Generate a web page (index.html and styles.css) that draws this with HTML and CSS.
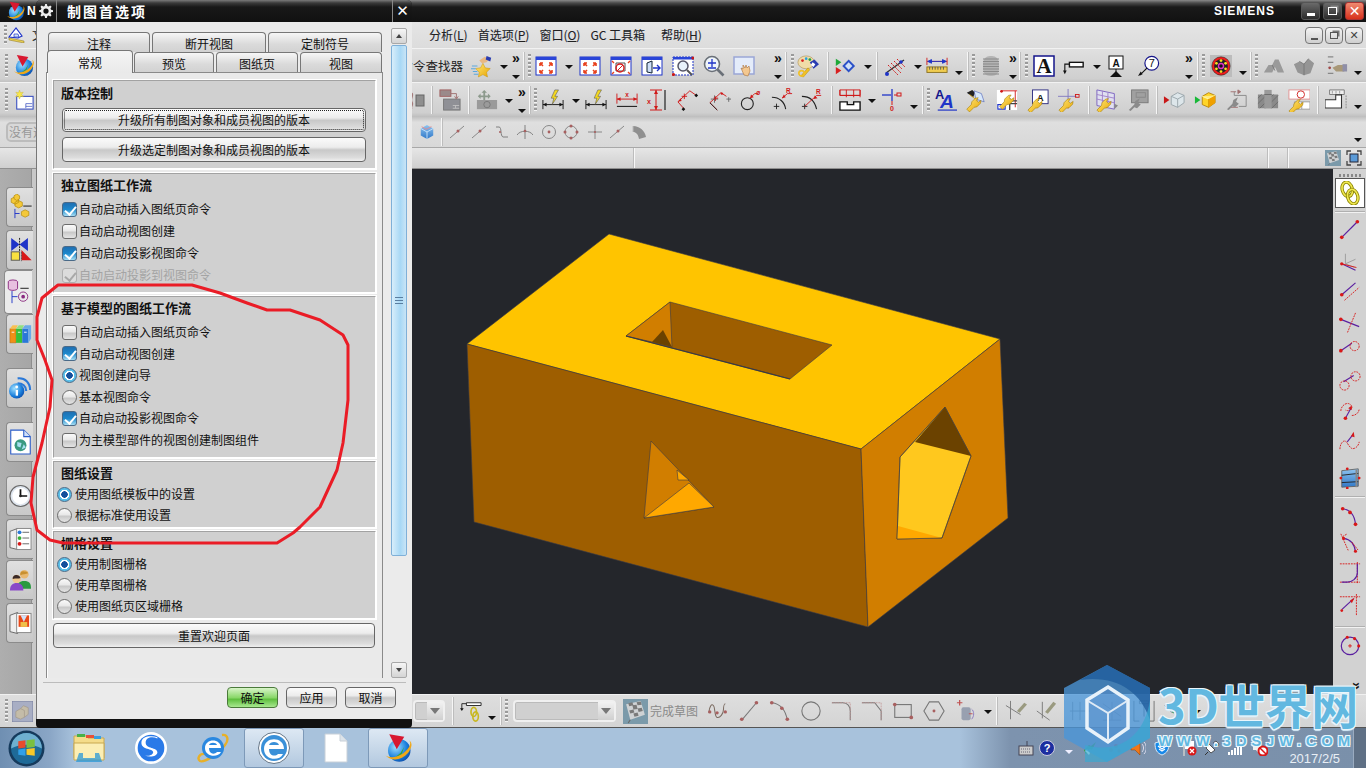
FILE: index.html
```html
<!DOCTYPE html>
<html lang="zh-CN">
<head>
<meta charset="utf-8">
<title>NX 制图首选项</title>
<link rel="stylesheet" href="styles.css">
</head>
<body>
<svg class="defs" aria-hidden="true">
<defs>
<radialGradient id="gb" cx=".35" cy=".35" r=".8"><stop offset="0" stop-color="#9fe0ff"/><stop offset=".6" stop-color="#1a7fdc"/><stop offset="1" stop-color="#0a3f9c"/></radialGradient>
<linearGradient id="gw" x1="0" y1="0" x2="0" y2="1"><stop offset="0" stop-color="#8fc4f0"/><stop offset="1" stop-color="#2f78c8"/></linearGradient>
<linearGradient id="gy" x1="0" y1="0" x2="1" y2="1"><stop offset="0" stop-color="#ffe97a"/><stop offset="1" stop-color="#e8a400"/></linearGradient>
<symbol id="logo" viewBox="0 0 24 24"><circle cx="13" cy="14" r="9" fill="url(#gb)"/><path d="M9 20l5-4 3-5-2 6z" fill="#35a83a"/><path d="M2 18c5 3 14 1 19-7 1-2 1-4 0-5 3 2 2 6-1 10-5 6-13 7-18 2z" fill="#f0a818"/><path d="M5 1l12 2-6 10z" fill="#d81830"/></symbol>
<symbol id="mi0" viewBox="0 0 18 16"><path d="M1 10L8 1l6 8-4 2z" fill="#fff" stroke="#1f34c8" stroke-width="1.200"/><path d="M6 7h4l1 3H6z" fill="#cfe0f8" stroke="#1f34c8" stroke-width=".7"/><path d="M1 11l15 3v2L1 13z" fill="#e8d050" stroke="#8a7020" stroke-width=".5"/></symbol>
<symbol id="nw" viewBox="0 0 22 22"><rect x="3" y="7" width="18" height="14" fill="#fff" stroke="#3a50c0" stroke-width="1.200"/><path d="M13 15h7M13 18h7M13 15v5" stroke="#3a50c0" stroke-width=".8"/><path d="M6 0l1.200 3 3-.6-1.800 2.600 2 2.400-3-.4L6 10 4.800 7 1.800 7.400l2-2.400L2 2.400 5 3z" fill="#f8e84c" stroke="#c8b020" stroke-width=".4"/></symbol>
<symbol id="win" viewBox="0 0 22 22"><rect x="1" y="2" width="20" height="18" fill="#fff" stroke="#1f34c8"/><rect x="1" y="2" width="20" height="3" fill="#2a45d8"/><g fill="none" stroke="#e8401c" stroke-width="1.600"><path d="M5 8l3 3M5 8h3M5 8v3M17 8l-3 3M17 8h-3M17 8v3M5 18l3-3M5 18h3M5 18v-3M17 18l-3-3M17 18h-3M17 18v-3"/></g></symbol>
<symbol id="winb" viewBox="0 0 22 22"><rect x="1" y="2" width="20" height="18" fill="#fff" stroke="#1f34c8"/><rect x="1" y="2" width="20" height="3" fill="#2a45d8"/><path d="M6 8h9v8H6z" fill="none" stroke="#555"/><circle cx="10" cy="13" r="4" fill="none" stroke="#d81c1c" stroke-width="1.400"/><path d="M7 16l6-6" stroke="#d81c1c"/><path d="M2 6l2 2M20 6l-2 2M2 19l2-2M20 19l-2-2" stroke="#e8401c" stroke-width="1.400"/></symbol>
<symbol id="wind" viewBox="0 0 22 22"><rect x="1" y="2" width="20" height="18" fill="#fff" stroke="#1f34c8"/><rect x="1" y="2" width="20" height="3" fill="#2a45d8"/><path d="M6 8l5-2v12l-5-1z" fill="#cfe0f8" stroke="#123"/><path d="M12 13h7M16 10l3 3-3 3" fill="none" stroke="#1f34c8" stroke-width="1.400"/></symbol>
<symbol id="wins" viewBox="0 0 22 22"><rect x="1" y="2" width="20" height="18" fill="#fff" stroke="#1f34c8" stroke-dasharray="2 1"/><rect x="1" y="2" width="20" height="2.500" fill="#2a45d8"/><circle cx="11" cy="11" r="5" fill="#e8f2fa" stroke="#556" stroke-width="1.500"/><path d="M15 15l5 5" stroke="#555" stroke-width="2"/><circle cx="21" cy="3" r="1.600" fill="#c81818"/><circle cx="1.500" cy="19.500" r="1.600" fill="#c81818"/></symbol>
<symbol id="mag" viewBox="0 0 22 22"><circle cx="9" cy="9" r="7.500" fill="#eef4fa" stroke="#6a7078" stroke-width="1.600"/><path d="M14.500 14.500l6 6" stroke="#6a7078" stroke-width="2.600"/><path d="M5 8h8M9 4v8M5 13h8" stroke="#1f34c8" stroke-width="1.300"/></symbol>
<symbol id="hwin" viewBox="0 0 22 22"><rect x="1" y="2" width="20" height="17" fill="#e4ecfa" stroke="#9aa6d6" stroke-width="1.500"/><path d="M11 20l-3-7 2 1 0-4 2 3 1-3 1 3 2-2 1 5-2 5z" fill="#f4c890" stroke="#a8703a" stroke-width=".6"/></symbol>
<symbol id="star" viewBox="0 0 24 24"><path d="M13 9l2.500 5 5.500.8-4 3.900 1 5.300-5-2.600-5 2.600 1-5.300-4-3.900 5.500-.8z" fill="url(#gy)" stroke="#c89000" stroke-width=".5"/><path d="M1 12h6M0 15h5M2 18h5M3 21h5" stroke="#4ea4e0"/><path d="M9 6l6-4 5 2-3 4-5 1z" fill="#e8b884"/><path d="M17 1l5 2-1 4-5-2z" fill="#2a3cb0"/></symbol>
<symbol id="pal" viewBox="0 0 24 24"><ellipse cx="10" cy="8" rx="9" ry="7" fill="#f0dca8" stroke="#a88848" stroke-width=".6"/><circle cx="6" cy="6" r="1.500" fill="#d82020"/><circle cx="10" cy="4" r="1.500" fill="#2aa0e0"/><circle cx="14" cy="5" r="1.500" fill="#20a040"/><path d="M14 8l5-3 5 5-6 5z" fill="#2a3cb0"/><path d="M17 8l3 2-2 3-3-2z" fill="#fff"/><path d="M4 23l8-9 2 2-7 8z" fill="#f0c028" stroke="#b08808" stroke-width=".5"/><circle cx="5" cy="20" r="3" fill="none" stroke="#f0c028" stroke-width="1.800"/></symbol>
<symbol id="dia" viewBox="0 0 24 24"><path d="M2 4l6 4-6 4z" fill="#1ea838"/><path d="M2 13l6 4-6 4z" fill="#d82020"/><path d="M9 12l7-7 7 7-7 7z" fill="#2a50c8"/><path d="M12 12l4-4 4 4-4 4z" fill="#cfe0f8"/></symbol>
<symbol id="redd" viewBox="0 0 22 22"><path d="M1 18L19 5" stroke="#333" stroke-width="1.400"/><path d="M3 10l10 10M6 8l10 10M9 6l8 8M12 4l8 8" stroke="#d02020" stroke-dasharray="2 1"/><circle cx="2" cy="19" r="2" fill="#1f34c8"/><circle cx="16" cy="7" r="1.800" fill="#1f34c8"/></symbol>
<symbol id="rule" viewBox="0 0 24 24"><path d="M1 7h22M1 3v8M23 3v8" stroke="#d02020" fill="none"/><path d="M2 7h20M2 7l4-2v4zM22 7l-4-2v4z" stroke="#1f34c8" fill="#1f34c8"/><rect x="1" y="13" width="22" height="6" fill="#f0cc50" stroke="#8a7020"/><path d="M4 13v3M7 13v3M10 13v3M13 13v3M16 13v3M19 13v3" stroke="#555"/></symbol>
<symbol id="spring" viewBox="0 0 22 22"><rect x="3" y="1" width="16" height="20" rx="7" fill="#b4b4b4"/><path d="M3 4h16M3 6.500h16M3 9h16M3 11.500h16M3 14h16M3 16.500h16M3 19h16" stroke="#8a8a8a"/></symbol>
<symbol id="abox" viewBox="0 0 22 22"><rect x="1" y="1" width="20" height="20" fill="#fff" stroke="#14148a" stroke-width="1.500"/><text x="11" y="18" class="ta">A</text></symbol>
<symbol id="lead" viewBox="0 0 24 24"><rect x="7" y="8" width="15" height="5" fill="#fff" stroke="#111" stroke-width="1.500"/><path d="M7 10H2v8" fill="none" stroke="#111" stroke-width="1.200"/><path d="M0 17h4l-2 4z" fill="#111"/></symbol>
<symbol id="astand" viewBox="0 0 22 22"><rect x="4" y="1" width="14" height="13" fill="#fff" stroke="#111"/><text x="11" y="12" class="tb2">A</text><path d="M11 14v3" stroke="#111"/><path d="M5 22l6-6 6 6z" fill="#111"/></symbol>
<symbol id="bal" viewBox="0 0 24 24"><circle cx="15" cy="9" r="7.500" fill="#fff" stroke="#14148a" stroke-width="1.300"/><text x="15" y="13.500" class="tb3">7</text><path d="M10 14L2 22" stroke="#111" stroke-width="1.200"/><path d="M0 23l3-5 2 3z" fill="#111"/></symbol>
<symbol id="bear" viewBox="0 0 24 24"><rect width="24" height="24" fill="#bcbcbc"/><circle cx="12" cy="12" r="10" fill="#f01c1c" stroke="#222" stroke-width=".6"/><circle cx="12" cy="12" r="7.500" fill="#222"/><circle cx="12" cy="12" r="3.500" fill="#e030c8"/><circle cx="12" cy="12" r="2" fill="#111"/><g fill="#f8e020"><circle cx="12" cy="6" r="1.500"/><circle cx="17" cy="9" r="1.500"/><circle cx="17" cy="15" r="1.500"/><circle cx="12" cy="18" r="1.500"/><circle cx="7" cy="15" r="1.500"/><circle cx="7" cy="9" r="1.500"/></g></symbol>
<symbol id="g1" viewBox="0 0 24 24"><path d="M1 19l5-8h4l3-6h4l6 14H16l-3-6-3 6z" fill="#9a9a9a"/><path d="M10 11l3 6" stroke="#777"/></symbol>
<symbol id="g2" viewBox="0 0 24 24"><path d="M1 10l6-3 5 3 5-6 6 5-4 11-7 2-7-3z" fill="#959595"/><path d="M12 10v12M7 7l5 3 5-6" stroke="#777" fill="none"/></symbol>
<symbol id="g3" viewBox="0 0 24 24"><path d="M2 2h6M2 8h6M2 20h6" stroke="#888" stroke-width="1.500"/><circle cx="4" cy="14" r="1.500" fill="#a04848"/><path d="M7 14l6-3h7v7h-9z" fill="#a89878"/><rect x="18" y="10" width="5" height="8" fill="#8f8fa8"/></symbol>
<symbol id="gry1" viewBox="0 0 22 22"><path d="M1 4c2 3-2 6 0 9s-2 5 0 7M5 4c2 3-2 6 0 9s-2 5 0 7M9 4c2 3-2 6 0 9s-2 5 0 7" fill="none" stroke="#a47a7a" stroke-width="1.300"/><rect x="13" y="6" width="8" height="11" fill="#8f8f8f" stroke="#666"/></symbol>
<symbol id="gry2" viewBox="0 0 24 24"><rect x="1" y="1" width="12" height="7" fill="#9a8a8a" stroke="#a06060"/><rect x="5" y="11" width="18" height="12" fill="#8f9096" stroke="#777"/><path d="M13 5h6v5M17 8l2 3 2-3" fill="none" stroke="#a07070"/><path d="M15 18h7M15 21h7M18 18v3" stroke="#c0c0c0"/></symbol>
<symbol id="move" viewBox="0 0 24 24"><path d="M6 1l3 3H7v3h3V5l3 3-3 3V9H7v3h2l-3 3-3-3h2V9H2v2L-1 8l3-3v2h3V4H3z" fill="#8d9a8d" transform="translate(3 0)"/><rect x="1" y="12" width="22" height="10" fill="#9a9a9a"/><circle cx="12" cy="17" r="3.500" fill="none" stroke="#777"/></symbol>
<symbol id="dim" viewBox="0 0 24 24"><path d="M1 12v10M23 12v10M1 17h22" stroke="#111"/><path d="M1 17l4-2v4zM23 17l-4-2v4z" fill="#111"/><path d="M14 1l-4 9h3l-2 7 6-9h-3l4-7z" fill="#f4d820" stroke="#555" stroke-width=".6"/></symbol>
<symbol id="dimx" viewBox="0 0 24 24"><path d="M1 5v11M23 5v11M1 11h22" stroke="#d01818"/><path d="M1 11l4-2v4zM23 11l-4-2v4z" fill="#d01818"/><text x="12" y="9" class="tr">x</text><path d="M1 19h22" stroke="#222" stroke-width="1.200"/></symbol>
<symbol id="dimv" viewBox="0 0 22 22"><path d="M4 1h12M4 21h12M10 1v20" stroke="#d01818"/><path d="M10 1l-2 4h4zM10 21l-2-4h4z" fill="#d01818"/><text x="3" y="15" class="tr">x</text><path d="M19 1v20" stroke="#222" stroke-width="1.200"/></symbol>
<symbol id="ang1" viewBox="0 0 24 24"><path d="M1 14L14 2l7 5M1 14l7 8" fill="none" stroke="#d01818"/><path d="M5 8h6M8 5v6" stroke="#d01818"/><path d="M21 5l2 2-2 2-2-2zM7 20l2 2-2 2-2-2z" fill="#111"/><path d="M1 14l3-4 1 3z" fill="#d01818"/></symbol>
<symbol id="ang2" viewBox="0 0 24 24"><path d="M1 15l12-11 6 4M1 15l8 8" fill="none" stroke="#d01818"/><path d="M1 15l8 8" stroke="#222"/><path d="M2 11h8M6 7v8M19 11h5M21.500 9v5" stroke="#666"/><path d="M5 10h5M7 8v5" stroke="#d01818"/><circle cx="14" cy="5" r="1.300" fill="#d01818"/></symbol>
<symbol id="diam" viewBox="0 0 24 24"><circle cx="8" cy="16" r="6.500" fill="none" stroke="#222" stroke-width="1.200"/><path d="M11 10l5-5h3" fill="none" stroke="#d01818"/><path d="M11 10l1-4 3 3z" fill="#d01818"/><text x="20" y="7" class="tr">ø</text></symbol>
<symbol id="rad1" viewBox="0 0 24 24"><path d="M1 9c8 0 14 5 15 13" fill="none" stroke="#222" stroke-width="1.200"/><path d="M3 19h6M6 16v6" stroke="#222"/><path d="M12 10l6-5h5" fill="none" stroke="#d01818"/><path d="M12 10l2-4 2 3z" fill="#d01818"/><text x="19" y="4.500" class="tr">R</text></symbol>
<symbol id="rad2" viewBox="0 0 24 24"><path d="M1 8c8 0 14 5 16 14" fill="none" stroke="#222" stroke-width="1.200"/><path d="M1 19h6M4 16v6" stroke="#222"/><path d="M4 19l13-12h5" fill="none" stroke="#d01818"/><path d="M14 11l1-4 3 3z" fill="#d01818"/><text x="19" y="5" class="tr">R</text></symbol>
<symbol id="step" viewBox="0 0 24 24"><path d="M1 1h22v6H1zM1 7V1M8 1v8M16 1v8M23 1v8" fill="none" stroke="#d01818"/><path d="M1 14h8v3h7v-3h7v9H1z" fill="#fff" stroke="#111" stroke-width="1.500"/><path d="M1 7h22" stroke="#d01818"/></symbol>
<symbol id="axis" viewBox="0 0 22 22"><path d="M0 6h9" stroke="#1f34c8" stroke-width="1.300"/><path d="M10 0v12" stroke="#1f34c8" stroke-width="1.300"/><path d="M10 12v4" stroke="#d01818"/><path d="M12 6h3" stroke="#d01818"/><rect x="15" y="4" width="4" height="3" fill="none" stroke="#d01818"/><text x="10" y="22" class="tr">0</text></symbol>
<symbol id="aa" viewBox="0 0 24 24"><text x="0" y="11" class="tpa">A</text><text x="13" y="21" class="tpb">A</text><path d="M3 23h21" stroke="#1f34c8" stroke-width="1.300"/></symbol>
<g id="wr"><path d="M3 22l5-5 .5-3 4-4 3-.5-2 3 2 2 3-2-.5 3-4 4-3 .5-5 5z" fill="url(#gy)" stroke="#a07800" stroke-width=".6"/></g>
<symbol id="wr1" viewBox="0 0 24 24"><path d="M3 4l6-3 3 3-2 5z" fill="#222"/><path d="M11 2l8 3 3 9-9-3z" fill="#d8e8fa" stroke="#3a50b0" stroke-width=".6"/><path d="M6 6l9 7" stroke="#c8a020"/><use href="#wr"/></symbol>
<symbol id="wr2" viewBox="0 0 24 24"><rect x="1" y="1" width="22" height="22" fill="#fff"/><path d="M6 2h17M21 2v18" stroke="#d01818"/><path d="M2 17h8v5H2z" fill="none" stroke="#1f34c8" stroke-width="1.200"/><path d="M15 13h8M15 16h8" stroke="#444" stroke-width="1.200"/><path d="M15 10v13" stroke="#111" stroke-width="1.200"/><circle cx="6" cy="2.500" r="1.500" fill="#d01818"/><use href="#wr" transform="translate(1 -3)"/></symbol>
<symbol id="wr3" viewBox="0 0 24 24"><rect x="6" y="1" width="17" height="15" fill="#fff" stroke="#2a2a80"/><text x="14.500" y="13" class="tb2">A</text><use href="#wr" transform="translate(-2 1)"/></symbol>
<symbol id="wr4" viewBox="0 0 24 24"><path d="M11 0v18M0 8h20" stroke="#8078c0"/><rect x="19" y="6" width="4" height="3" fill="none" stroke="#d01818"/><path d="M11 18v3" stroke="#d01818"/><use href="#wr" transform="translate(-2 1)"/></symbol>
<symbol id="wall" viewBox="0 0 24 24"><path d="M1 1l19 4v17l-19-4z" fill="#e0e0f0" stroke="#7a60c0"/><path d="M1 6l19 4M1 11l19 4M7 2v15M13 4v15" stroke="#a080c8"/><path d="M20 16l4 2-4 4z" fill="#888"/><use href="#wr" transform="translate(-2 1)"/></symbol>
<symbol id="gwr" viewBox="0 0 24 24"><rect x="5" y="1" width="18" height="14" fill="#a0a0a0" stroke="#777"/><rect x="10" y="4" width="10" height="5" fill="none" stroke="#888"/><path d="M2 23l6-6 1-4 5-3-2 5 3 2-4 4-3-1-4 4z" fill="#8a8a8a"/></symbol>
<symbol id="cb1" viewBox="0 0 24 24"><path d="M1 8l6 4-6 4z" fill="#c81818"/><path d="M9 8l7-4 7 3v8l-7 5-7-3z" fill="#dde6ea" stroke="#98a4aa"/><path d="M9 8l7 3 7-4M16 11v9" stroke="#98a4aa" fill="none"/></symbol>
<symbol id="cb2" viewBox="0 0 24 24"><path d="M1 8l6 4-6 4z" fill="#18b838"/><path d="M9 8l7-4 7 3v8l-7 5-7-3z" fill="#ffd428" stroke="#b8860b"/><path d="M9 8l7 3 7-4" stroke="#fff6b0" fill="#ffeb80"/><path d="M16 11v9" stroke="#c89000"/><path d="M16 11l7-4v8l-7 5z" fill="#f0a000"/></symbol>
<symbol id="gwr2" viewBox="0 0 24 24"><path d="M9 3v4h13v12H14" fill="none" stroke="#888"/><path d="M5 3h6M16 3l-3-2v4zM5 20h8" stroke="#a07070" fill="#a07070"/><path d="M1 22l6-6 1-4 5-3-2 5 3 2-4 4-3-1-4 4z" fill="#8a8a8a"/></symbol>
<symbol id="hatch" viewBox="0 0 24 24"><rect x="1" y="6" width="22" height="15" fill="#8a8a8a"/><path d="M1 10l4-4M1 16l10-10M3 21l15-15M9 21l14-14M16 21l7-7" stroke="#6c6c6c"/><rect x="8" y="1" width="8" height="20" fill="#9a9a9a"/><path d="M8 6h8" stroke="#6a6a6a"/></symbol>
<symbol id="wr5" viewBox="0 0 24 24"><rect x="1" y="1" width="23" height="10" fill="#fff" stroke="#e09090"/><circle cx="14" cy="6" r="4" fill="none" stroke="#d02020"/><path d="M7 14h17v8H7zM15 14v8" fill="#fff" stroke="#999"/><use href="#wr" transform="translate(-2 2)"/></symbol>
<symbol id="frm" viewBox="0 0 24 24"><path d="M5 1h16v5H5z" fill="#eee" stroke="#777"/><path d="M8 2v3M12 2v3M16 2v3" stroke="#999"/><path d="M0 12v10h20V6h-7v6z" fill="#fff" stroke="#333" stroke-width="1.300" transform="translate(0 1) scale(.9)"/><path d="M23 7v14" stroke="#888" stroke-dasharray="2 1"/></symbol>
<symbol id="cube" viewBox="0 0 18 18"><path d="M2 5l7-4 7 4v8l-7 4-7-4z" fill="url(#gw)"/><path d="M2 5l7 4 7-4M9 9v8" stroke="#cfe6fa" fill="none"/><path d="M3 3l5 3 6-3" stroke="#e88" fill="none"/></symbol>
<symbol id="p1" viewBox="0 0 16 16"><path d="M1 14L15 2" stroke="#888"/><circle cx="9" cy="7" r="1.500" fill="#a86060"/></symbol>
<symbol id="p2" viewBox="0 0 16 16"><path d="M2 3h3c3 0 1 9 4 10h5" fill="none" stroke="#808080"/><circle cx="6" cy="8" r="1" fill="#a86060"/></symbol>
<symbol id="p3" viewBox="0 0 16 16"><path d="M0 11c3-5 13-5 16 0M8 1v14" fill="none" stroke="#808080"/><circle cx="8" cy="7" r="1.300" fill="#a86060"/></symbol>
<symbol id="p4" viewBox="0 0 16 16"><circle cx="8" cy="8" r="6.500" fill="none" stroke="#888"/><circle cx="8" cy="8" r="1.400" fill="#a86060"/></symbol>
<symbol id="p5" viewBox="0 0 16 16"><circle cx="8" cy="8" r="6" fill="none" stroke="#888"/><g fill="#a86060"><circle cx="8" cy="2" r="1.500"/><circle cx="14" cy="8" r="1.500"/><circle cx="8" cy="14" r="1.500"/><circle cx="2" cy="8" r="1.500"/></g></symbol>
<symbol id="p6" viewBox="0 0 16 16"><path d="M1 8h14M8 1v14" stroke="#888"/><circle cx="8" cy="8" r="1.100" fill="#a86060"/></symbol>
<symbol id="p7" viewBox="0 0 16 16"><path d="M2 2c7 0 12 5 13 11L8 15C7 10 5 8 2 8z" fill="#8f8f8f"/><path d="M2 2v6" stroke="#bbb"/></symbol>
<symbol id="flag" viewBox="0 0 24 24"><rect width="24" height="24" fill="#7b9aaa"/><path d="M3 5l14-3 4 13-14 5z" fill="#cfd2d4"/><path d="M5 4l4-1 1 3-4 1zM13 3l4-.5 1 3-4 .5zM9 6l4-.5 1 4-4 .5zM6 11l4-1 1 3-4 1zM14 9l4-.5 1 3-4 1zM10 14l4-1 1 3-4 1z" fill="#7a7a7a"/><path d="M7 20l-2 3" stroke="#666"/></symbol>
<symbol id="frame" viewBox="0 0 16 16"><path d="M1 5V1h4M11 1h4v4M15 11v4h-4M5 15H1v-4" fill="none" stroke="#444" stroke-width="1.300"/><rect x="4" y="4" width="8" height="8" fill="#5a9ad8" stroke="#223"/></symbol>
<symbol id="t1" viewBox="0 0 24 28"><path d="M2 5l4-2 4 2v4l-4 2-4-2zM6 9l4-2 4 2v4l-4 2-4-2z" fill="#f4c838" stroke="#b08808" stroke-width=".7"/><path d="M2 2l3-2 3 2v3L5 7 2 5z" fill="#f4c838" stroke="#b08808" stroke-width=".7" transform="translate(3 0)"/><path d="M6 16v10M6 21h5" stroke="#1f34c8"/><path d="M15 13h9" stroke="#111"/><path d="M13 19l4-2 4 2v4l-4 2-4-2z" fill="#f4c838" stroke="#b08808" stroke-width=".7"/></symbol>
<symbol id="t2" viewBox="0 0 24 28"><path d="M2 1l9 7 9-7v14l-9-7-9 7z" fill="#1f34c8"/><path d="M11 1v14" stroke="#111" stroke-dasharray="2 1"/><rect x="2" y="16" width="9" height="9" fill="#f8e040" stroke="#555"/><path d="M13 25V14l11 11z" fill="#d81818"/><path d="M13 16v10" stroke="#555" stroke-dasharray="2 1"/></symbol>
<symbol id="t3" viewBox="0 0 24 28"><ellipse cx="6" cy="3" rx="5" ry="2" fill="#e8c0e0" stroke="#8a2a80"/><path d="M1 3v7c0 3 10 3 10 0V3" fill="#e8c0e0" stroke="#8a2a80"/><path d="M14 10h9" stroke="#111"/><path d="M5 13v13M5 19h6" stroke="#1f34c8"/><circle cx="17" cy="19" r="5" fill="none" stroke="#8a2a80"/><circle cx="17" cy="19" r="2" fill="#8a2a80"/></symbol>
<symbol id="t4" viewBox="0 0 26 24"><path d="M1 6h7v16H1z" fill="#f09018" stroke="#a06010" stroke-width=".5"/><path d="M1 6l3-4h6l-2 4z" fill="#f8c050"/><path d="M8 6h7v16H8z" fill="#38c038"/><path d="M8 6l3-4h6l-2 4z" fill="#90e080"/><path d="M15 6h7v16h-7z" fill="#2a78d8"/><path d="M15 6l3-4h7l-3 4zM22 6l3-4v15l-3 5z" fill="#6aaae8"/><path d="M3 10h3M10 10h3M17 10h3" stroke="#fff"/></symbol>
<symbol id="t5" viewBox="0 0 24 24"><path d="M9 2c8-1 13 5 13 12M9 7c5 0 9 3 9 8M9 12c3 0 5 1 5 4" fill="none" stroke="#2a78d8" stroke-width="2.200"/><circle cx="8" cy="15" r="8" fill="url(#gb)"/><rect x="7" y="14" width="2.400" height="6" fill="#fff"/><circle cx="8" cy="11" r="1.500" fill="#fff"/></symbol>
<symbol id="t6" viewBox="0 0 20 24"><path d="M1 1h12l6 6v16H1z" fill="#fff" stroke="#2a5cc8"/><path d="M13 1v6h6" fill="#cfe0f8" stroke="#2a5cc8"/><circle cx="10" cy="15" r="5.500" fill="#3a9a80"/><path d="M7 12l4 1-1 4-3-1zM13 14l2 3-4 2z" fill="#a8e0f0"/></symbol>
<symbol id="t7" viewBox="0 0 24 24"><circle cx="12" cy="12" r="11" fill="#dfe6ef" stroke="#666" stroke-width="1.200"/><circle cx="12" cy="12" r="8.500" fill="#fff"/><path d="M12 5v7h7" fill="none" stroke="#111" stroke-width="1.800"/><circle cx="12" cy="12" r="1.400" fill="#222"/></symbol>
<symbol id="t8" viewBox="0 0 24 24"><path d="M1 4l8-3v22l-8-2z" fill="#eee" stroke="#666"/><rect x="8" y="1" width="15" height="22" fill="#fff" stroke="#888"/><circle cx="11" cy="5" r="2" fill="#2a78d8"/><circle cx="11" cy="11" r="2" fill="#38b038"/><circle cx="11" cy="17" r="2" fill="#d81818"/><path d="M14 5h7M14 11h7M14 17h7" stroke="#666"/></symbol>
<symbol id="t9" viewBox="0 0 24 24"><circle cx="16" cy="6" r="4.500" fill="#e8b870"/><path d="M16 3c-3-1-5 1-4 4 2-1 6-1 8-2-1-2-2-2-4-2z" fill="#c89030"/><path d="M8 21c0-6 3-8 8-8s7 2 7 8z" fill="#2a9a40"/><circle cx="8" cy="11" r="4.500" fill="#f0c890"/><path d="M4 11c-1-5 7-6 8-1-2 1-5 0-8 1z" fill="#3a2a28"/><path d="M1 23c0-6 3-8 7-8s7 2 7 8z" fill="#8a48c8"/></symbol>
<symbol id="t10" viewBox="0 0 24 24"><path d="M1 4l8-3v22l-8-2z" fill="#eee" stroke="#666"/><rect x="8" y="2" width="15" height="20" fill="#fff" stroke="#888"/><path d="M10 4h11v12H10z" fill="#e84818"/><path d="M12 4l3.500 7L19 4z" fill="#cfe0f8"/><rect x="12" y="11" width="7" height="5" fill="#f0c048"/></symbol>
<symbol id="chain" viewBox="0 0 24 26"><ellipse cx="9" cy="9" rx="5.500" ry="8" fill="none" stroke="#8a8400" stroke-width="3.600" transform="rotate(-15 9 9)"/><ellipse cx="9" cy="9" rx="5.500" ry="8" fill="none" stroke="#f0e850" stroke-width="1.800" transform="rotate(-15 9 9)"/><ellipse cx="15" cy="17" rx="5.500" ry="8" fill="none" stroke="#8a8400" stroke-width="3.600" transform="rotate(-15 15 17)"/><ellipse cx="15" cy="17" rx="5.500" ry="8" fill="none" stroke="#f0e850" stroke-width="1.800" transform="rotate(-15 15 17)"/></symbol>
<symbol id="r1" viewBox="0 0 24 24"><path d="M3 20L20 3" stroke="#5a1fa0" stroke-width="1.300"/><circle cx="3" cy="20" r="2" fill="#d81818"/><circle cx="20" cy="3" r="2" fill="#d81818"/></symbol>
<symbol id="r2" viewBox="0 0 24 24"><path d="M7 14V3M7 14l11-5M7 14l10 4" stroke="#9a9a9a"/><path d="M3 14l15 7" stroke="#5a1fa0" stroke-width="1.300"/><path d="M3 14l16 4" stroke="#d81818"/><circle cx="3" cy="14" r="1.800" fill="#d81818"/></symbol>
<symbol id="r3" viewBox="0 0 24 24"><path d="M3 15L18 2" stroke="#5a1fa0" stroke-width="1.300"/><path d="M6 21L22 7" stroke="#d81818" stroke-dasharray="2 1"/><circle cx="3" cy="15" r="2" fill="#d81818"/></symbol>
<symbol id="r4" viewBox="0 0 24 24"><path d="M2 8l20 8" stroke="#5a1fa0" stroke-width="1.300"/><path d="M18 1L9 23" stroke="#d81818" stroke-dasharray="2 1"/><circle cx="2" cy="8" r="2" fill="#d81818"/></symbol>
<symbol id="r5" viewBox="0 0 24 24"><path d="M2 16L14 8" stroke="#5a1fa0" stroke-width="1.300"/><circle cx="2" cy="16" r="2" fill="#d81818"/><circle cx="17" cy="11" r="5" fill="none" stroke="#d81818" stroke-dasharray="2 1"/></symbol>
<symbol id="r6" viewBox="0 0 24 24"><path d="M5 14L16 7" stroke="#5a1fa0" stroke-width="1.300"/><circle cx="18" cy="8" r="5" fill="none" stroke="#d81818" stroke-dasharray="2 1"/><circle cx="6" cy="18" r="5" fill="none" stroke="#d81818" stroke-dasharray="2 1"/></symbol>
<symbol id="r7" viewBox="0 0 24 24"><path d="M2 13c0-6 8-12 12-5 1 3-4 6-7 4M14 18c5 0 8-4 8-7" fill="none" stroke="#d81818" stroke-dasharray="2 1"/><path d="M7 21L13 10" stroke="#5a1fa0" stroke-width="1.200"/><circle cx="7" cy="21" r="2" fill="#d81818"/><path d="M14 7l-4 3 4 2z" fill="#d81818"/></symbol>
<symbol id="r8" viewBox="0 0 24 24"><path d="M1 22c0-6 4-11 7-8 3 4 5 9 9 7 3-1 5-5 5-7" fill="none" stroke="#d81818" stroke-dasharray="2 1"/><path d="M9 14l7-9" stroke="#5a1fa0" stroke-width="1.200"/><path d="M16 3l-3 5 4 1z" fill="#d81818"/></symbol>
<symbol id="r9" viewBox="0 0 24 24"><path d="M3 4l18-2v19L3 22z" fill="url(#gw)" stroke="#666"/><path d="M3 9l18-2M3 17l18-1" stroke="#222"/><path d="M19 3v19" stroke="#888" stroke-width="2"/><g fill="#d81818"><circle cx="2" cy="12" r="1.500"/><circle cx="22" cy="12" r="1.500"/><circle cx="9" cy="2" r="1.500"/><circle cx="9" cy="23" r="1.500"/></g></symbol>
<symbol id="r10" viewBox="0 0 24 24"><path d="M4 3c8 1 13 7 14 17" fill="none" stroke="#5a1fa0" stroke-width="1.300"/><g fill="#d81818"><circle cx="4" cy="3" r="2"/><circle cx="12" cy="7" r="2"/><circle cx="18" cy="20" r="2"/></g></symbol>
<symbol id="r11" viewBox="0 0 24 24"><path d="M5 7c8 1 12 6 13 15" fill="none" stroke="#5a1fa0" stroke-width="1.300"/><path d="M2 2l8 18M4 5l5-3M14 11l7 9" stroke="#d81818" stroke-dasharray="2 1"/><g fill="#d81818"><circle cx="5" cy="7" r="1.700"/><circle cx="18" cy="21" r="1.700"/></g></symbol>
<symbol id="r12" viewBox="0 0 24 24"><path d="M1 2h22M1 22h22M20 0v24" stroke="#d81818" stroke-dasharray="2 1"/><path d="M3 22h6c5 0 11-4 11-10V2" fill="none" stroke="#5a1fa0" stroke-width="1.300"/></symbol>
<symbol id="r13" viewBox="0 0 24 24"><path d="M1 3h22M19 0v24" stroke="#d81818" stroke-dasharray="2 1"/><path d="M3 17L16 5" stroke="#5a1fa0" stroke-width="1.300"/><path d="M17 4l-5 3 2 3z" fill="#d81818"/><circle cx="3" cy="18" r="1.500" fill="#d81818"/></symbol>
<symbol id="r14" viewBox="0 0 24 24"><circle cx="12" cy="13" r="9.500" fill="none" stroke="#5a1fa0" stroke-width="1.300"/><g fill="#d81818"><circle cx="9" cy="3.500" r="1.700"/><circle cx="17" cy="5" r="1.700"/><circle cx="21.500" cy="13" r="1.700"/></g><path d="M10 13h4M12 11v4" stroke="#d81818"/></symbol>
<symbol id="bbox" viewBox="0 0 22 22"><rect width="22" height="22" fill="#a8aec4" stroke="#7a80a0"/><path d="M4 11l5-3 4 2v7l-4 2-5-2zM9 8l3-3 5 2v7l-4 3" fill="#c4bca8" stroke="#a09888" stroke-width=".7"/></symbol>
<symbol id="lchain" viewBox="0 0 24 24"><path d="M7 3h16v3H7z" fill="#fff" stroke="#222"/><path d="M7 4H2v6" fill="none" stroke="#222"/><path d="M0 9h4l-2 3z" fill="#111"/><ellipse cx="15" cy="13" rx="3" ry="5" fill="none" stroke="#c8b820" stroke-width="1.800"/><ellipse cx="17" cy="18" rx="3" ry="5" fill="none" stroke="#c8b820" stroke-width="1.800"/></symbol>
<symbol id="b1" viewBox="0 0 24 24"><path d="M2 14c1-8 3-10 5-8s1 12 4 13 7-4 7-9c0-3 1-6 2-6" fill="none" stroke="#7a6a60" stroke-width="1.100"/><g fill="#a86060"><circle cx="3" cy="13" r="1.800"/><circle cx="11" cy="14" r="1.800"/><circle cx="20" cy="13" r="1.800"/></g></symbol>
<symbol id="b2" viewBox="0 0 24 24"><path d="M3 22L19 3" stroke="#777" stroke-width="1.100"/><circle cx="3" cy="21" r="2" fill="#a86060"/><circle cx="19" cy="3" r="2" fill="#a86060"/></symbol>
<symbol id="b3" viewBox="0 0 24 24"><path d="M3 3c9 1 15 8 17 19" fill="none" stroke="#777" stroke-width="1.100"/><g fill="#a86060"><circle cx="3" cy="3" r="2"/><circle cx="14" cy="9" r="2"/><circle cx="20" cy="21" r="2"/></g></symbol>
<symbol id="b4" viewBox="0 0 24 24"><circle cx="12" cy="12" r="10" fill="none" stroke="#777" stroke-width="1.200"/></symbol>
<symbol id="b5" viewBox="0 0 24 24"><path d="M1 3h12c5 0 8 4 8 9v10" fill="none" stroke="#777" stroke-width="1.100"/><path d="M1 3h20v19" fill="none" stroke="#c09090" stroke-width=".8" stroke-dasharray="2 1"/></symbol>
<symbol id="b6" viewBox="0 0 24 24"><path d="M1 3h14l7 9v10" fill="none" stroke="#777" stroke-width="1.100"/><path d="M1 3h21v19" fill="none" stroke="#c09090" stroke-width=".8" stroke-dasharray="2 1"/></symbol>
<symbol id="b7" viewBox="0 0 24 24"><rect x="3" y="5" width="18" height="14" fill="none" stroke="#777" stroke-width="1.200"/><circle cx="3" cy="5" r="2" fill="#a86060"/><circle cx="21" cy="19" r="2" fill="#a86060"/></symbol>
<symbol id="b8" viewBox="0 0 24 24"><path d="M7 2h10l6 10-6 10H7L1 12z" fill="none" stroke="#777" stroke-width="1.200"/><circle cx="12" cy="12" r="1.600" fill="#a86060"/></symbol>
<symbol id="b9" viewBox="0 0 24 24"><path d="M1 3h6M4 0v6" stroke="#c05050" stroke-width="1.300"/><rect x="6" y="8" width="10" height="14" rx="2" fill="#98a0b0"/><path d="M17 10c3 2 3 8 0 11" fill="none" stroke="#8a78c0"/><path d="M14 15h4" stroke="#c05050"/></symbol>
<symbol id="b10" viewBox="0 0 24 24"><path d="M1 6l16 10M6 1v20" stroke="#777"/><path d="M13 12l8-9 3 2-8 9z" fill="#9a9a80"/></symbol>
<symbol id="b11" viewBox="0 0 24 24"><path d="M2 12l14 10M8 2v18" stroke="#777"/><path d="M11 13l9-11 3 2-9 11z" fill="#9a9a80"/></symbol>
<symbol id="b12" viewBox="0 0 24 24"><path d="M4 2v20M12 2v20M1 12h22" stroke="#666" opacity=".7"/></symbol>
<symbol id="b13" viewBox="0 0 24 24"><path d="M2 22h20M12 2v20M2 4l20 14" stroke="#666" opacity=".7"/></symbol>
<symbol id="b14" viewBox="0 0 24 24"><path d="M1 1v22h6M23 1v22h-6M7 1h10v3H7z" fill="none" stroke="#555" opacity=".8"/><path d="M12 4v14" stroke="#555"/></symbol>
<symbol id="b15" viewBox="0 0 24 24"><path d="M2 6l8 8 8-10M2 22h18" fill="none" stroke="#678" opacity=".9"/><path d="M6 6l6 8" stroke="#3a9a3a" stroke-width="2"/></symbol>
<symbol id="orb" viewBox="0 0 36 36"><circle cx="18" cy="18" r="17.500" fill="#153a5c"/><circle cx="18" cy="18" r="15" fill="#1e6a98"/><path d="M3 18A15 15 0 0 1 33 18c-8-5-22-5-30 0z" fill="#6fb0d0"/><path d="M10 11l7-1v7l-7 1z" fill="#e84c2c"/><path d="M18 10l8-1v7.500l-8 1z" fill="#7ac040"/><path d="M10 19l7-1v7l-7-1z" fill="#30a0e8"/><path d="M18 18.500l8-1V25l-8-1z" fill="#f8c828"/></symbol>
<symbol id="fold" viewBox="0 0 32 30"><path d="M1 3h12l2 2h16v20H1z" fill="#f4dc8a" stroke="#c8a850"/><path d="M4 1h8v3H4z" fill="#48b048"/><path d="M13 2h8v3h-8z" fill="#e85038"/><path d="M21 3h7v3h-7z" fill="#38a0e0"/><path d="M1 10h30v17H1z" fill="#fbeeb4" stroke="#c8a850"/><path d="M6 20h20l3 9H3z" fill="#2a98d8" opacity=".75"/><path d="M10 20h12v5H10z" fill="#fbeeb4"/></symbol>
<symbol id="sg" viewBox="0 0 30 30"><circle cx="15" cy="15" r="15" fill="#fff"/><circle cx="15" cy="15" r="12.500" fill="#2a7ae8"/><path d="M21 6c-5-2-11-1-11 4 0 6 11 4 11 9 0 4-7 5-12 3 5 1 8-1 8-3 0-4-11-2-11-9 0-6 9-7 15-5z" fill="#fff"/></symbol>
<symbol id="ie" viewBox="0 0 32 30"><path d="M8 21c-6-1-8 5-5 7 4 2 18-7 25-16 4-5 3-11-3-10" fill="none" stroke="#e8b028" stroke-width="2.400"/><circle cx="16" cy="15" r="11" fill="#2a88e0"/><path d="M8 15h16c0-10-16-10-16 0 0 9 13 10 16 4h-4c-3 3-8 2-8-4" fill="#fff"/><path d="M12 12h8c-1-3-7-3-8 0z" fill="#2a88e0"/></symbol>
<symbol id="ie2" viewBox="0 0 32 32"><circle cx="16" cy="16" r="15.500" fill="#fff" stroke="#678"/><circle cx="16" cy="16" r="13" fill="#3a90d8"/><path d="M6 17h20c0-13-20-13-20 0 0 11 15 13 19 5h-5c-3 3-9 2-9-5" fill="#fff"/><path d="M11 13h10c-1-4-9-4-10 0z" fill="#3a90d8"/></symbol>
<symbol id="doc" viewBox="0 0 24 30"><path d="M1 1h15l7 7v21H1z" fill="#fff" stroke="#c8d0d8"/><path d="M16 1v7h7" fill="#dde4ea" stroke="#c8d0d8"/></symbol>
<symbol id="y1" viewBox="0 0 16 16"><rect x="1" y="6" width="14" height="9" fill="#ccc" stroke="#445"/><path d="M3 9h10M3 12h10" stroke="#667" stroke-dasharray="1 1"/><path d="M9 6V1" stroke="#445"/></symbol>
<symbol id="y2" viewBox="0 0 16 16"><circle cx="8" cy="8" r="7.500" fill="#1c2ea0" stroke="#ccd"/><text x="8" y="12" class="tw">?</text></symbol>
<symbol id="y3" viewBox="0 0 16 16"><path d="M2 10l5-5 2 1 5-4-4 8-3-1-3 5z" fill="#30a030"/><path d="M5 9l3 4-1 2-4-4z" fill="#fff"/></symbol>
<symbol id="y4" viewBox="0 0 16 16"><g fill="#a85858"><circle cx="4" cy="10" r="2"/><circle cx="9" cy="6" r="2"/><circle cx="12" cy="11" r="1.700"/></g></symbol>
<symbol id="y5" viewBox="0 0 16 16"><path d="M1 6h4l5-5v14l-5-5H1z" fill="#f07818" stroke="#804010" stroke-width=".5"/><path d="M12 4c2 2 2 6 0 8M14 2c3 3 3 9 0 12" fill="none" stroke="#dde"/></symbol>
<symbol id="y6" viewBox="0 0 16 16"><path d="M8 1l7 2c0 7-2 10-7 12C3 13 1 10 1 3z" fill="#1888e8" stroke="#fff" stroke-width=".8"/><path d="M4 6l4 3 4-3M5 9l3 2 3-2" fill="none" stroke="#fff" stroke-width="1.200"/></symbol>
<symbol id="y7" viewBox="0 0 16 16"><path d="M3 0v16" stroke="#ccc" stroke-width="1.500"/><path d="M4 1h9v8H4z" fill="#fff"/><circle cx="11" cy="11" r="4.500" fill="#d81818"/><path d="M9 9l4 4M13 9l-4 4" stroke="#fff" stroke-width="1.300"/></symbol>
<symbol id="y8" viewBox="0 0 16 16"><path d="M9 3l3-2 3 3-2 3zM5 4l6 6-4 3-5-5z" fill="#fff" stroke="#333" stroke-width=".8"/><path d="M1 15l3-3" stroke="#333"/></symbol>
<symbol id="y9" viewBox="0 0 16 16"><path d="M1 12h2v3H1zM4 10h2v5H4zM7 8h2v7H7zM10 5h2v10h-2zM13 2h2v13h-2z" fill="#fff"/></symbol>
<symbol id="y10" viewBox="0 0 16 16"><path d="M1 6h3l4-5v14l-4-5H1z" fill="#eee"/><circle cx="11" cy="11" r="4.500" fill="#fff" stroke="#d81818" stroke-width="2"/><path d="M8 8l6 6" stroke="#d81818" stroke-width="1.500"/></symbol>
</defs>
</svg>

<div class="app">
  <header class="titlebar">
    <svg class="logo-t"><use href="#logo"/></svg><span class="nx">NX</span>
    <span class="siemens">SIEMENS</span>
    <span class="wbtn"><span class="min-g"></span></span>
    <span class="wbtn"><span class="max-g"></span></span>
    <span class="wbtn wbtn-c">✕</span>
  </header>

  <nav class="menubar">
    <div class="mleft"><span class="grip g-short"></span><svg class="mic"><use href="#mi0"/></svg><span class="mtx">文件(F)</span></div>
    <span class="mi">分析(<u>L</u>)</span><span class="mi">首选项(<u>P</u>)</span><span class="mi">窗口(<u>O</u>)</span><span class="mi mi-gc">GC 工具箱</span><span class="mi">帮助(<u>H</u>)</span>
    <div class="dctl"><span class="db"><span class="d-min"></span></span><span class="db"><span class="d-max"></span></span><span class="db db-x">✕</span></div>
  </nav>

  <div class="tb r12">
    <div class="lb lb1"><span class="grip"></span><svg class="lg"><use href="#logo"/></svg><span class="cmd">命令查找器</span></div>
    <svg class="ic g5"><use href="#star"/></svg><i class="dd g7"></i><span class="chev g3"><b>»</b><i class="dd"></i></span><i class="sep g2"></i><i class="grip g3"></i>
    <svg class="ic g4"><use href="#win"/></svg><i class="dd g8"></i><svg class="ic g6"><use href="#win"/></svg><svg class="ic g9"><use href="#winb"/></svg><svg class="ic g9"><use href="#wind"/></svg><svg class="ic g9"><use href="#wins"/></svg><svg class="ic g9"><use href="#mag"/></svg><svg class="ic g8"><use href="#hwin"/></svg><span class="chev g18"><b>»</b><i class="dd"></i></span><i class="sep g2"></i><i class="grip g4"></i>
    <svg class="ic g3"><use href="#pal"/></svg><i class="sep g8"></i><svg class="ic g5"><use href="#dia"/></svg><i class="dd g8"></i><i class="sep g4"></i><svg class="ic g7"><use href="#redd"/></svg><i class="dd g7"></i><svg class="ic g4"><use href="#rule"/></svg><i class="dd dd-low g7"></i><i class="sep g4"></i><i class="grip g3"></i>
    <svg class="ic g5"><use href="#spring"/></svg><span class="chev g6"><b>»</b><i class="dd"></i></span><i class="sep g1"></i><i class="grip g4"></i>
    <svg class="ic g5"><use href="#abox"/></svg><svg class="ic g8"><use href="#lead"/></svg><i class="dd g8"></i><svg class="ic g4"><use href="#astand"/></svg><svg class="ic g11"><use href="#bal"/></svg><span class="chev g24"><b>»</b><i class="dd"></i></span><i class="sep g3"></i><i class="grip g3"></i>
    <svg class="ic g5"><use href="#bear"/></svg><i class="dd dd-low g7"></i><i class="sep g3"></i><i class="grip g3"></i>
    <svg class="ic g5"><use href="#g1"/></svg><svg class="ic g8"><use href="#g2"/></svg><svg class="ic g11"><use href="#g3"/></svg><i class="dd dd-low g6"></i>
  </div>

  <div class="tb r12">
    <div class="lb lb2"><span class="grip"></span><svg class="lg2"><use href="#nw"/></svg></div>
    <svg class="ic"><use href="#gry1"/></svg><i class="sep g6"></i><svg class="ic g6"><use href="#gry2"/></svg><i class="sep g7"></i><svg class="ic g6"><use href="#move"/></svg><i class="dd g7"></i><span class="chev g4"><b>»</b><i class="dd"></i></span><i class="sep g2"></i><i class="grip g3"></i>
    <svg class="ic g5"><use href="#dim"/></svg><i class="dd g8"></i><svg class="ic g5"><use href="#dim"/></svg><svg class="ic g9"><use href="#dimx"/></svg><svg class="ic g8"><use href="#dimv"/></svg><svg class="ic g9"><use href="#ang1"/></svg><svg class="ic g10"><use href="#ang2"/></svg><svg class="ic g9"><use href="#diam"/></svg><svg class="ic g9"><use href="#rad1"/></svg><svg class="ic g8"><use href="#rad2"/></svg><i class="sep g8"></i>
    <svg class="ic g6"><use href="#step"/></svg><i class="dd g7"></i><svg class="ic g6"><use href="#axis"/></svg><i class="dd dd-low g6"></i><i class="sep g4"></i><i class="grip g3"></i>
    <svg class="ic g5"><use href="#aa"/></svg><svg class="ic g7"><use href="#wr1"/></svg><svg class="ic g10"><use href="#wr2"/></svg><svg class="ic g9"><use href="#wr3"/></svg><svg class="ic g9"><use href="#wr4"/></svg><i class="sep g8"></i>
    <svg class="ic g6"><use href="#wall"/></svg><svg class="ic g9"><use href="#gwr"/></svg><i class="sep g7"></i>
    <svg class="ic g5"><use href="#cb1"/></svg><svg class="ic g9"><use href="#cb2"/></svg><svg class="ic g10"><use href="#gwr2"/></svg><svg class="ic g9"><use href="#hatch"/></svg><svg class="ic g9"><use href="#wr5"/></svg><i class="sep g7"></i>
    <svg class="ic g6"><use href="#frm"/></svg><i class="dd dd-low g7"></i>
  </div>

  <div class="tb r3">
    <div class="lb lb3"><span class="pill">没有选择过滤器</span></div>
    <svg class="ics"><use href="#cube"/></svg><i class="sep g6"></i><svg class="ics g6"><use href="#p1"/></svg><svg class="ics g6"><use href="#p1"/></svg><svg class="ics g7"><use href="#p2"/></svg><svg class="ics g7"><use href="#p3"/></svg><svg class="ics g8"><use href="#p4"/></svg><svg class="ics g6"><use href="#p5"/></svg><svg class="ics g8"><use href="#p6"/></svg><svg class="ics g6"><use href="#p1"/></svg><svg class="ics g6"><use href="#p7"/></svg>
    <i class="dd dd-end"></i>
  </div>

  <div class="status">
    <span class="st st1"></span><span class="st st2"></span><span class="st st3"></span>
    <span class="stic"><svg class="i16"><use href="#flag"/></svg><svg class="i16"><use href="#frame"/></svg></span>
  </div>

  <main class="main">
    <aside class="rail">
      <div class="rt t-a"><svg class="ti"><use href="#t1"/></svg></div>
      <div class="rt t-b"><svg class="ti"><use href="#t2"/></svg></div>
      <div class="rt rt-on t-c"><svg class="ti"><use href="#t3"/></svg></div>
      <div class="rt"><svg class="ti"><use href="#t4"/></svg></div>
      <div class="rt t-d"><svg class="ti"><use href="#t5"/></svg></div>
      <div class="rt t-d"><svg class="ti"><use href="#t6"/></svg></div>
      <div class="rt t-d"><svg class="ti"><use href="#t7"/></svg></div>
      <div class="rt t-b"><svg class="ti"><use href="#t8"/></svg></div>
      <div class="rt t-e"><svg class="ti"><use href="#t9"/></svg></div>
      <div class="rt t-b"><svg class="ti"><use href="#t10"/></svg></div>
    </aside>

    <section class="view">
      <svg class="scene" viewBox="36 169 1297 525" preserveAspectRatio="none">
        <g stroke="#3a3a44" stroke-width=".6" stroke-linejoin="round">
          <polygon points="609,234 1000,339 861,449 467,344" fill="#ffc400"/>
          <polygon points="467,344 861,449 868,627 474,522" fill="#9e5e00"/>
          <polygon points="861,449 1000,339 1008,518 868,627" fill="#d17e00"/>
          <polygon points="670,302 832,345 790,379 626,336" fill="#9e5e00"/>
          <polygon points="626,336 670,302 672,347 652,342" fill="#d17e00"/>
          <polygon points="663,330 652,342 672,347" fill="#6b4200" stroke="none"/>
          <polyline points="626,336 790,379" fill="none" stroke="#3a3a44" stroke-width="1.200"/>
          <polygon points="651,441 714,507 644,518" fill="#d17e00"/>
          <polygon points="644,518 714,507 689,483" fill="#ffa800"/>
          <polygon points="677,470 678,480 689,480" fill="#ffa800"/>
          <polygon points="945,407 971,456 942,538 897,539 900,457" fill="#ffc81e"/>
          <polygon points="945,407 971,456 915,442" fill="#6b4200" stroke="none"/>
          <polygon points="898,526 942,538 897,539" fill="#ffa800" stroke="none"/>
          <polygon points="945,407 971,456 942,538 897,539 900,457" fill="none"/>
        </g>
      </svg>
    </section>

    <aside class="rrail">
      <i class="grip-h"></i>
      <div class="rsel"><svg class="rs"><use href="#chain"/></svg></div>
      <i class="hsep"></i>
      <svg class="ri rr1"><use href="#r1"/></svg><svg class="ri rr2"><use href="#r2"/></svg><svg class="ri rr3"><use href="#r3"/></svg><svg class="ri rr4"><use href="#r4"/></svg><svg class="ri rr5"><use href="#r5"/></svg><svg class="ri rr6"><use href="#r6"/></svg><svg class="ri rr3"><use href="#r7"/></svg><svg class="ri rr3"><use href="#r8"/></svg><svg class="ri rr7"><use href="#r9"/></svg>
      <i class="hsep hs2"></i>
      <svg class="ri rr8"><use href="#r10"/></svg><svg class="ri rr9"><use href="#r11"/></svg><svg class="ri rr10"><use href="#r12"/></svg><svg class="ri rr12"><use href="#r13"/></svg>
      <i class="hsep hs3"></i>
      <svg class="ri rr11"><use href="#r14"/></svg>
      <b class="rch">»</b>
    </aside>
  </main>

  <div class="tb bbar">
    <div class="lb lb4"><span class="grip"></span><svg class="lg3"><use href="#bbox"/></svg></div>
    <span class="combo cb-s"><i class="cbtn"></i></span><i class="sep g7"></i>
    <svg class="ic g6"><use href="#lchain"/></svg><i class="dd dd-low g6"></i><i class="sep g4"></i><i class="grip g3"></i>
    <span class="combo cb-l g5"><i class="cbtn"></i></span>
    <svg class="if g7"><use href="#flag"/></svg><span class="done g2">完成草图</span>
    <svg class="ic g8"><use href="#b1"/></svg><svg class="ic g10"><use href="#b2"/></svg><svg class="ic g8"><use href="#b3"/></svg><svg class="ic g9"><use href="#b4"/></svg><svg class="ic g9"><use href="#b5"/></svg><svg class="ic g8"><use href="#b6"/></svg><svg class="ic g9"><use href="#b7"/></svg><svg class="ic g9"><use href="#b8"/></svg><svg class="ic g11"><use href="#b9"/></svg><i class="dd g6"></i><i class="sep g4"></i>
    <svg class="ic g7"><use href="#b10"/></svg><svg class="ic g8"><use href="#b11"/></svg><svg class="ic g12"><use href="#b12"/></svg><svg class="ic g10"><use href="#b13"/></svg><svg class="ic g10"><use href="#b14"/></svg><svg class="ic g8"><use href="#b15"/></svg><i class="dd g8"></i><i class="dd dd-low g5"></i>
  </div>

  <footer class="taskbar">
    <svg class="orb"><use href="#orb"/></svg>
    <svg class="tk tk1"><use href="#fold"/></svg>
    <svg class="tk tk2"><use href="#sg"/></svg>
    <svg class="tk tk3"><use href="#ie"/></svg>
    <span class="tbtn tb-a"><svg class="tk"><use href="#ie2"/></svg></span>
    <svg class="tk tk4"><use href="#doc"/></svg>
    <span class="tbtn tb-b"><svg class="tk"><use href="#logo"/></svg></span>
    <div class="tray">
      <svg class="yi"><use href="#y1"/></svg><svg class="yi g5"><use href="#y2"/></svg><i class="dd dd-w"></i><svg class="yi g9"><use href="#y3"/></svg><svg class="yi g9"><use href="#y4"/></svg><svg class="yi g7"><use href="#y5"/></svg><svg class="yi g8"><use href="#y6"/></svg><svg class="yi g11"><use href="#y7"/></svg><svg class="yi g7"><use href="#y8"/></svg><svg class="yi g7"><use href="#y9"/></svg><svg class="yi g9"><use href="#y10"/></svg>
      <span class="date">2017/2/5</span>
      <span class="showd"></span>
    </div>
  </footer>

  <div class="dlg">
    <div class="dlg-title">
      <span class="gear">
        <svg class="gs" viewBox="0 0 16 16"><path d="M7 0h2l.5 2.200 1.500.6L12.900 1.600l1.500 1.500-1.200 1.900.6 1.500L16 7v2l-2.200.5-.6 1.500 1.200 1.900-1.500 1.500-1.900-1.200-1.500.6L9 16H7l-.5-2.200-1.500-.6-1.900 1.200-1.500-1.500 1.200-1.900-.6-1.500L0 9V7l2.200-.5.6-1.500-1.200-1.900 1.500-1.500 1.900 1.200 1.500-.6z" fill="#eee"/><circle cx="8" cy="8" r="3" fill="#111"/></svg>
      </span>
      <span class="dtitle">制图首选项</span>
      <span class="dclose">✕</span>
    </div>
    <div class="dlg-body">
      <div class="dmain">
        <div class="pane-wrap">
          <div class="tabs tabs-a">
            <span class="tab w102">注释</span><span class="tab w114">断开视图</span><span class="tab w114">定制符号</span>
          </div>
          <div class="tabs tabs-b">
            <span class="tab tab-on">常规</span><span class="tab w80">预览</span><span class="tab w82">图纸页</span><span class="tab w82">视图</span>
          </div>
          <div class="pane">
            <section class="sec s1">
              <h3>版本控制</h3>
              <button class="btn b-first b-focus">升级所有制图对象和成员视图的版本</button>
              <button class="btn b-next">升级选定制图对象和成员视图的版本</button>
            </section>
            <section class="sec s2">
              <h3>独立图纸工作流</h3>
              <label class="row"><i class="chk on"></i>自动启动插入图纸页命令</label>
              <label class="row"><i class="chk"></i>自动启动视图创建</label>
              <label class="row"><i class="chk on"></i>自动启动投影视图命令</label>
              <label class="row off"><i class="chk dis"></i>自动启动投影到视图命令</label>
            </section>
            <section class="sec s3">
              <h3>基于模型的图纸工作流</h3>
              <label class="row"><i class="chk"></i>自动启动插入图纸页命令</label>
              <label class="row"><i class="chk on"></i>自动启动视图创建</label>
              <label class="row"><i class="rad on"></i>视图创建向导</label>
              <label class="row"><i class="rad"></i>基本视图命令</label>
              <label class="row"><i class="chk on"></i>自动启动投影视图命令</label>
              <label class="row"><i class="chk"></i>为主模型部件的视图创建制图组件</label>
            </section>
            <section class="sec s4">
              <h3>图纸设置</h3>
              <label class="row"><i class="rad on"></i>使用图纸模板中的设置</label>
              <label class="row"><i class="rad"></i>根据标准使用设置</label>
            </section>
            <section class="sec s5">
              <h3>栅格设置</h3>
              <label class="row"><i class="rad on"></i>使用制图栅格</label>
              <label class="row"><i class="rad"></i>使用草图栅格</label>
              <label class="row"><i class="rad"></i>使用图纸页区域栅格</label>
            </section>
            <button class="btn b-reset">重置欢迎页面</button>
          </div>
        </div>
        <div class="vscroll">
          <span class="sb-btn"><i class="up"></i></span>
          <span class="sb-thumb"><i class="sb-grip"></i></span>
          <span class="sb-btn sb-dn"><i class="down"></i></span>
        </div>
      </div>
      <div class="dfoot">
        <button class="btn fb fb-ok">确定</button><button class="btn fb">应用</button><button class="btn fb">取消</button>
      </div>
    </div>
  </div>

  <svg class="ink" viewBox="0 0 1366 768">
    <path class="redline" d="M37 340L37 317L42 298L58 285L137 285L192 285L220 293L247 303L267 310L290 310L320 320L343 335L348 345L348 400L343 443L337 470L320 507L300 527L293 533L277 543L200 543L63 543L50 540L37 530L31 503L33 477L42 443L50 407L52 380L45 360L37 340"/>
    <g class="hex">
      <polygon points="1107,665 1150,688 1150,738 1107,762 1064,738 1064,688" fill="#4a96d8" opacity=".78"/>
      <path d="M1107 665L1150 688L1150 720C1140 690 1115 675 1080 680z" fill="#1f5c9c" opacity=".8"/>
      <path d="M1085 762L1107 762L1150 738L1150 700C1145 735 1120 755 1085 745z" fill="#3aa8d0" opacity=".7"/>
      <polygon points="1108,687 1128,700 1128,728 1108,742 1087,728 1087,700" fill="#5a90cc" fill-opacity=".5" stroke="#e8f2fa" stroke-width="3.500"/>
      <path d="M1088 701L1108 713L1127 701M1108 713V741" fill="none" stroke="#dfeaf5" stroke-width="2"/>
    </g>
  </svg>
  <div class="wm"><div class="wm1">3D世界网</div><div class="wm2">WWW.3DSJW.COM</div></div>
</div>
</body>
</html>
```
FILE: styles.css
```css
* { box-sizing: border-box; }
html, body { margin: 0; padding: 0; }
body { font: 12px/1.2 "Noto Sans CJK SC", "Liberation Sans", sans-serif; color: #111; background: #24262b; overflow: hidden; }
i { font-style: normal; display: block; flex: none; }
.defs { position: absolute; width: 0; height: 0; }
.app { position: relative; width: 1366px; height: 768px; overflow: hidden; display: flex; flex-direction: column; }

/* svg text */
.ta { font: bold 21px "Liberation Serif", serif; text-anchor: middle; fill: #111; }
.tb2 { font: bold 10px "Liberation Sans", sans-serif; text-anchor: middle; fill: #111; }
.tb3 { font: 12px "Liberation Sans", sans-serif; text-anchor: middle; fill: #111; }
.tr { font: bold 7px "Liberation Sans", sans-serif; text-anchor: middle; fill: #d01818; }
.tpa { font: bold 14px "Liberation Sans", sans-serif; fill: #14148a; }
.tpb { font: italic bold 21px "Liberation Sans", sans-serif; fill: #1f34c8; text-anchor: middle; }
.tw { font: bold 11px "Liberation Sans", sans-serif; fill: #fff; text-anchor: middle; }

/* title bar */
.titlebar { height: 22px; flex: none; display: flex; align-items: center; background: linear-gradient(#8a8a8a 0, #4a4a4a 3px, #1a1a1a 7px, #111 100%); position: relative; }
.logo-t { width: 23px; height: 20px; margin-left: 4px; }
.nx { color: #fff; font: bold 12px "Liberation Sans", sans-serif; }
.siemens { margin-left: auto; color: #fff; font: bold 12px "Liberation Sans", sans-serif; letter-spacing: 1px; }
.wbtn { width: 19px; height: 18px; margin-left: 3px; border: 1px solid #555; border-radius: 3px; background: linear-gradient(#6a6a6a, #2b2b2b); display: flex; align-items: center; justify-content: center; color: #fff; }
.siemens + .wbtn { margin-left: 26px; }
.wbtn-c { background: linear-gradient(#f08a70, #d8321c); font: bold 14px/1 "DejaVu Sans", sans-serif; margin-right: 2px; border-color: #a33; }
.min-g { width: 8px; height: 3px; background: #fff; margin-top: 7px; }
.max-g { width: 9px; height: 8px; border: 1.500px solid #fff; box-shadow: 2px -2px 0 -.5px #888; }

/* menu */
.menubar { height: 26px; flex: none; display: flex; align-items: center; background: linear-gradient(#e5e5e5, #dcdcdc); color: #222; }
.mleft { width: 429px; flex: none; display: flex; align-items: center; padding-left: 4px; overflow: hidden; }
.mic { width: 18px; height: 16px; margin-left: 1px; flex: none; }
.mtx { margin-left: 6px; }
.mi { margin-right: 10px; color: #222; white-space: nowrap; text-shadow: .5px 0 0 rgba(40, 90, 170, .25); }
.mi-gc { margin-right: 16px; }
.mi u { text-decoration-color: #222; }
.dctl { margin-left: auto; margin-right: 3px; display: flex; gap: 2px; }
.db { width: 18px; height: 17px; border: 1px solid #777; border-radius: 4px; background: linear-gradient(#f4f4f4, #cfcfcf); display: flex; align-items: center; justify-content: center; color: #444; font: bold 11px/1 "DejaVu Sans", sans-serif; }
.d-min { width: 7px; height: 2px; background: #555; margin-top: 7px; }
.d-max { width: 8px; height: 7px; border: 1px solid #555; box-shadow: 2px -2px 0 -.5px #777; }

/* toolbars */
.tb { display: flex; align-items: center; flex: none; }
.r12 { height: 34px; background: linear-gradient(#e0e0e0, #cfcfcf 90%, #c2c2c2); border-top: 1px solid #f2f2f2; }
.r3 { height: 32px; background: linear-gradient(#bdbdbd, #dfdfdf 20%, #d8d8d8); border-bottom: 1px solid #a8a8a8; }
.lb { flex: none; display: flex; align-items: center; overflow: hidden; height: 100%; }
.lb1 { width: 466px; padding-left: 5px; }
.lb2 { width: 403px; padding-left: 5px; }
.lb3 { width: 419px; padding-left: 6px; }
.lb4 { width: 413px; padding-left: 5px; }
.lg { width: 23px; height: 25px; margin-left: 4px; flex: none; }
.lg2 { width: 20px; height: 22px; margin-left: 6px; flex: none; }
.lg3 { width: 21px; height: 21px; margin-left: 4px; flex: none; }
.cmd { margin-left: auto; padding-right: 3px; font-size: 12.500px; color: #222; white-space: nowrap; }
.pill { border: 2px solid #bcbcbc; border-radius: 5px; height: 20px; padding: 0 0 0 1px; color: #999; background: #d8d8d8; white-space: nowrap; line-height: 16px; }
.ic { width: 22px; height: 24px; flex: none; }
.ics { width: 16px; height: 16px; flex: none; }
.grip { display: block; width: 3px; height: 24px; flex: none; background: repeating-linear-gradient(#9a9a9a 0 2px, #f4f4f4 2px 3px, transparent 3px 4px); }
.g-short { height: 20px; }
.sep { width: 2px; height: 28px; flex: none; border-left: 1px solid #f6f6f6; border-right: 1px solid #bdbdbd; }
.dd { width: 0; height: 0; border: 4px solid transparent; border-top: 4px solid #111; border-bottom: 0; flex: none; margin-top: 2px; box-sizing: content-box; }
.dd-low { margin-top: 14px; }
.dd-end { margin-left: auto; margin-right: 4px; margin-top: 16px; }
.chev { width: 10px; height: 26px; flex: none; display: flex; flex-direction: column; align-items: center; justify-content: space-between; }
.chev b { font: bold 14px/10px "Liberation Sans", sans-serif; color: #111; }
.chev .dd { margin: 0; }

.g1 { margin-left: 1px; } .g2 { margin-left: 2px; } .g3 { margin-left: 3px; } .g4 { margin-left: 4px; }
.g5 { margin-left: 5px; } .g6 { margin-left: 6px; } .g7 { margin-left: 7px; } .g8 { margin-left: 8px; }
.g9 { margin-left: 9px; } .g10 { margin-left: 10px; } .g11 { margin-left: 11px; } .g12 { margin-left: 12px; }
.g18 { margin-left: 18px; } .g24 { margin-left: 24px; }

/* status */
.status { height: 21px; flex: none; display: flex; align-items: stretch; background: linear-gradient(#e6e6e6, #cfcfcf); border-bottom: 1px solid #8f8f8f; }
.st { border-right: 1px solid #f8f8f8; box-shadow: inset -1px 0 0 #bdbdbd; flex: none; }
.st1 { width: 635px; } .st2 { width: 634px; } .st3 { width: 20px; }
.stic { margin-left: auto; display: flex; gap: 5px; align-items: center; padding-right: 4px; }
.i16 { width: 16px; height: 16px; }

/* main */
.main { height: 525px; flex: none; display: flex; }
.rail { width: 36px; flex: none; background: linear-gradient(90deg, #aeaeae, #a6a6a6 85%, #7f7f7f 89%, #c8c8c8 90%); display: flex; flex-direction: column; align-items: flex-start; padding-left: 6px; }
.rt { width: 27px; height: 40px; flex: none; border: 1px solid #8b8b8b; border-right: 0; border-radius: 4px 0 0 4px; background: linear-gradient(#e0e0e0, #c8c8c8); display: flex; align-items: center; justify-content: center; }
.rt-on { width: 28px; height: 44px; margin-left: -2px; background: #ebebeb; }
.ti { width: 23px; height: 26px; }
.t-a { margin-top: 18px; } .t-b { margin-top: 3px; } .t-c { margin-top: 0; } .t-d { margin-top: 14px; } .t-e { margin-top: 1px; }
.view { flex: 1; background: #24262b; min-width: 0; }
.scene { display: block; width: 100%; height: 100%; }
.rrail { width: 33px; flex: none; background: #d2d2d2; display: flex; flex-direction: column; align-items: center; }
.grip-h { width: 22px; height: 3px; margin-top: 5px; background: repeating-linear-gradient(90deg, #888 0 2px, transparent 2px 4px); }
.rsel { width: 30px; height: 30px; margin-top: 1px; background: #fff; border: 1px solid #555; display: flex; align-items: center; justify-content: center; flex: none; }
.rs { width: 22px; height: 24px; }
.hsep { width: 30px; height: 2px; margin-top: 3px; background: #f2f2f2; border-top: 1px solid #b0b0b0; flex: none; }
.ri { width: 22px; height: 22px; flex: none; }
.rr1 { margin-top: 6px; } .rr2 { margin-top: 10px; } .rr3 { margin-top: 8px; } .rr4 { margin-top: 9px; } .rr5 { margin-top: 2px; } .rr6 { margin-top: 11px; } .rr7 { margin-top: 16px; } .rr8 { margin-top: 8px; } .rr9 { margin-top: 4px; } .rr10 { margin-top: 8px; } .rr11 { margin-top: 6px; } .rr12 { margin-top: 10px; }
.hs2 { margin-top: 7px; } .hs3 { margin-top: 10px; }
.rch { margin-top: 24px; margin-left: 14px; font: bold 14px/12px "Liberation Sans", sans-serif; transform: rotate(90deg); }

/* bottom toolbar */
.bbar { height: 34px; background: linear-gradient(#dedede, #d4d4d4); border-top: 1px solid #f0f0f0; border-bottom: 1px solid #555; }
.combo { height: 22px; flex: none; border: 2px solid #f0f0f0; border-radius: 4px; background: #d0d0d0; display: flex; justify-content: flex-end; box-shadow: inset 0 0 0 1px #bbb; }
.cb-s { width: 32px; } .cb-l { width: 103px; }
.cbtn { width: 16px; height: 100%; background: linear-gradient(#f2f2f2, #cfcfcf); position: relative; display: flex; align-items: center; justify-content: center; }
.cbtn::after { content: ""; border: 5px solid transparent; border-top: 6px solid #777; border-bottom: 0; }
.if { width: 25px; height: 25px; flex: none; }
.done { width: 49px; color: #8a8a8a; flex: none; white-space: nowrap; }

/* taskbar */
.taskbar { height: 40px; flex: none; display: flex; align-items: center; background: linear-gradient(90deg, #6f8fb2 0, #8aa6c6 50px, #a8c2dc 75px, #a8c2dc 960px, #7d93ae 1010px, #7a90aa 1366px); }
.orb { width: 37px; height: 37px; margin-left: 8px; flex: none; }
.tk { width: 32px; height: 32px; flex: none; }
.tk1 { margin-left: 28px; } .tk2 { margin-left: 30px; } .tk3 { margin-left: 30px; }
.tbtn { height: 40px; flex: none; border: 1px solid #7d99b8; border-radius: 3px; background: linear-gradient(#dde8f3, #b2c8df); display: flex; align-items: center; justify-content: center; }
.tb-a { width: 60px; margin-left: 15px; }
.tk4 { margin-left: 20px; width: 24px; height: 30px; }
.tb-b { width: 60px; margin-left: 20px; }
.tb-b .tk { width: 30px; height: 32px; }
.tray { margin-left: auto; width: 348px; height: 40px; display: flex; align-items: center; position: relative; }
.yi { width: 16px; height: 16px; flex: none; margin-top: -1px; }
.dd-w { border-top-color: #eef; margin: 8px 0 0 10px; }
.date { margin-left: auto; margin-right: 13px; margin-top: 20px; color: #e8eef5; font: 13px "Liberation Sans", sans-serif; }
.showd { width: 13px; height: 40px; background: #5f7085; border-left: 1px solid #9aabc0; flex: none; }

/* dialog */
.dlg { position: absolute; left: 36px; top: 0; width: 376px; height: 728px; display: flex; flex-direction: column; background: #111; border-radius: 5px 5px 4px 4px; z-index: 5; }
.dlg-title { height: 22px; flex: none; display: flex; align-items: center; background: linear-gradient(#7a7a7a 0, #3a3a3a 3px, #181818 7px, #111); border-radius: 5px 5px 0 0; color: #fff; }
.gear { width: 21px; height: 22px; flex: none; display: flex; align-items: center; justify-content: center; border-right: 1px solid #888; }
.gs { width: 14px; height: 14px; }
.dtitle { margin-left: 10px; font-size: 14px; font-weight: bold; letter-spacing: 2px; }
.dclose { margin-left: auto; width: 20px; text-align: center; font: bold 15px/22px "DejaVu Sans", sans-serif; border-left: 1px solid #888; }
.dlg-body { height: 697px; flex: none; background: #ebebeb; border-left: 1px solid #777; display: flex; flex-direction: column; }
.dmain { height: 660px; flex: none; display: flex; padding: 6px 0 4px; }
.pane-wrap { width: 337px; margin-left: 9px; flex: none; display: flex; flex-direction: column; padding-top: 4px; }
.tabs { display: flex; height: 20px; flex: none; }
.tabs-a { padding-left: 2px; gap: 2px; }
.tabs-b { gap: 2px; padding-left: 1px; position: relative; }
.tab { height: 20px; border: 1px solid #777; border-bottom: 0; border-radius: 4px 4px 0 0; background: linear-gradient(#f6f6f6, #dadada 60%, #d2d2d2); text-align: center; line-height: 21px; font-size: 12px; flex: none; }
.w102 { width: 102px; } .w114 { width: 114px; } .w80 { width: 80px; } .w82 { width: 82px; }
.tab-on { width: 86px; height: 23px; margin-top: -2px; margin-right: -1px; background: linear-gradient(#f4f4f4, #e9e9e9); position: relative; z-index: 1; line-height: 23px; }
.pane { flex: 1; border: 1px solid #8a8a8a; border-bottom: 0; background: #eaeaea; padding: 7px 6px 0 6px; display: flex; flex-direction: column; min-height: 0; box-shadow: inset 1px 0 0 #fff; }
.sec { width: 323px; flex: none; background: #d0d0d0; border: 1px solid #a2a2a2; border-bottom-color: #fff; border-right-color: #fff; outline: 1px solid #fff; outline-offset: 0; }
.sec h3 { margin: 0 0 0 7px; font-size: 13px; line-height: 18px; font-weight: bold; color: #111; }
.s1 { height: 89px; padding-top: 3px; }
.s2 { height: 120px; margin-top: 4px; padding-top: 2px; }
.s3 { height: 162px; margin-top: 3px; padding-top: 2px; }
.s4 { height: 67px; margin-top: 3px; padding-top: 2px; }
.s5 { height: 88px; margin-top: 3px; padding-top: 2px; }
.row { display: flex; align-items: center; height: 22px; padding-left: 8px; font-size: 12px; color: #111; white-space: nowrap; }
.s2 h3 { margin-bottom: 4px; }
.s3 h3 { margin-bottom: 4.500px; }
.s3 .row { height: 21.600px; }
.s4 h3, .s5 h3 { margin-bottom: 1.500px; }
.s4 .row, .s5 .row { height: 21px; padding-left: 3px; }
.s4 .rad, .s5 .rad { margin-right: 3px; }
.off { color: #a4a4a4; }
.chk, .rad { width: 15px; height: 15px; margin-right: 2px; flex: none; border: 1px solid #6c6c6c; background: linear-gradient(#fafafa, #e8e8e8 45%, #c8c8c8 55%, #e4e4e4); position: relative; }
.chk { border-radius: 3px; }
.rad { border-radius: 50%; }
.chk.on { background: linear-gradient(#1f6fb2, #1c88cc 50%, #a8dff5); border-color: #4a6a88; }
.chk.on::after { content: ""; position: absolute; left: 3.500px; top: 1px; width: 5px; height: 9px; border: solid #fff; border-width: 0 2.500px 2.500px 0; transform: rotate(40deg); }
.chk.dis { background: #dcdcdc; border-color: #b0b0b0; }
.chk.dis::after { content: ""; position: absolute; left: 3.500px; top: 1px; width: 5px; height: 9px; border: solid #a8a8a8; border-width: 0 2.500px 2.500px 0; transform: rotate(40deg); }
.rad.on { background: radial-gradient(circle at 50% 50%, #14509c 0 3px, #fff 3.500px 4.500px, #5ac0ea 5px); border-color: #4a6a88; }
.btn { display: block; font: 12px/1 "Noto Sans CJK SC", sans-serif; color: #111; border: 1px solid #666; border-radius: 4px; background: linear-gradient(#fbfbfb, #ececec 40%, #c8c8c8 52%, #dcdcdc 85%, #efefef); padding: 0; }
.b-first { width: 304px; height: 24px; margin: 6px 0 0 8px; }
.b-focus { outline: 1px dotted #222; outline-offset: -3px; }
.b-next { width: 304px; height: 25px; margin: 5px 0 0 8px; }
.b-reset { width: 322px; height: 25px; margin-top: 4px; flex: none; }
.vscroll { width: 16px; margin-left: 8px; flex: none; display: flex; flex-direction: column; }
.sb-btn { height: 16px; flex: none; border: 1px solid #a8a8a8; border-radius: 2px; background: linear-gradient(#f6f6f6, #d4d4d4); display: flex; align-items: center; justify-content: center; }
.sb-dn { margin-top: 106px; }
.up { border: 3px solid transparent; border-bottom: 4px solid #444; border-top: 0; width: 0; }
.down { border: 3px solid transparent; border-top: 4px solid #444; border-bottom: 0; width: 0; }
.sb-thumb { height: 511px; flex: none; margin-top: 1px; border: 1px solid #7fb0d8; border-radius: 2px; background: linear-gradient(90deg, #d8eefb, #a8d8f5 60%, #c8e4f6); display: flex; align-items: center; justify-content: center; }
.sb-grip { width: 8px; height: 7px; background: repeating-linear-gradient(#5a7ea0 0 1px, transparent 1px 3px); }
.dfoot { height: 37px; margin-left: 6px; margin-right: 6px; border-top: 1px solid #bcbcbc; display: flex; align-items: flex-start; justify-content: flex-end; gap: 8px; padding: 4px 10px 0 0; flex: none; }
.fb { width: 51px; height: 21px; }
.fb-ok { background: linear-gradient(#d8f4c8, #8ad86a 50%, #60c040 60%, #a8e890); border-color: #4a7a3a; }

/* overlays */
.ink { position: absolute; left: 0; top: 0; width: 1366px; height: 768px; z-index: 6; pointer-events: none; }
.redline { fill: none; stroke: #ea1c26; stroke-width: 3; stroke-linejoin: round; stroke-linecap: round; }
.wm { position: absolute; left: 1158px; top: 681px; width: 205px; z-index: 7; pointer-events: none; color: #62b8e0; white-space: nowrap; }
.wm1 { font: bold 47px/46px "Noto Sans CJK SC", "Liberation Sans", sans-serif; letter-spacing: -.5px; text-shadow: 1px 1px 0 #eaf6fc, -1px -1px 0 #eaf6fc, 1px -1px 0 #eaf6fc, -1px 1px 0 #eaf6fc, 0 2px 1px #d8eefa; }
.wm2 { font: bold 15px/15px "Liberation Sans", sans-serif; letter-spacing: 4.700px; margin-top: 6px; text-shadow: 1px 1px 0 #eaf6fc, -1px -1px 0 #eaf6fc, 1px -1px 0 #eaf6fc, -1px 1px 0 #eaf6fc; }
```
